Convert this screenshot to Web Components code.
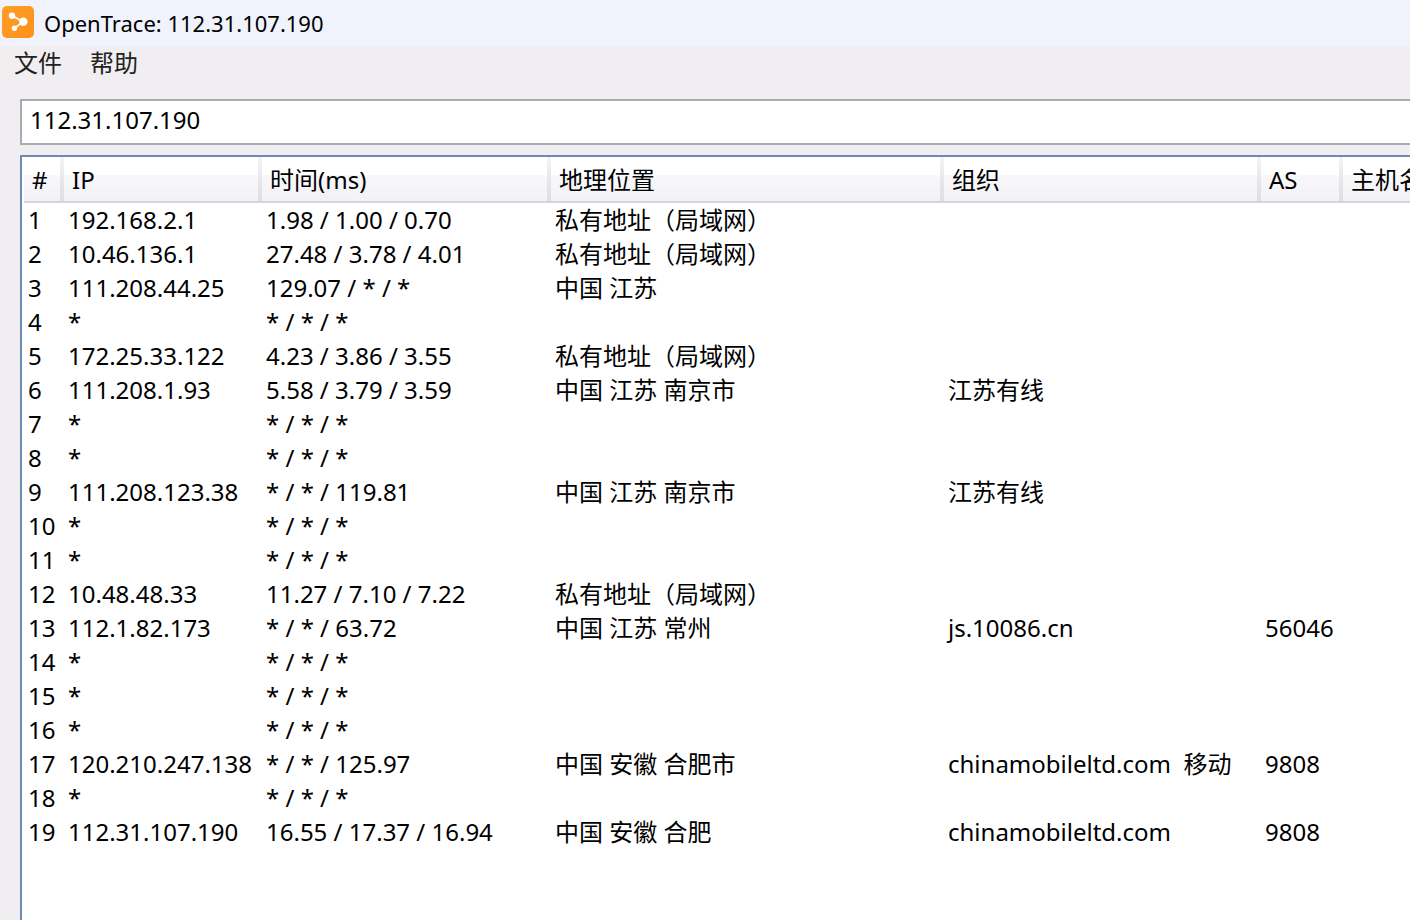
<!DOCTYPE html>
<html lang="zh-CN">
<head>
<meta charset="utf-8">
<title>OpenTrace: 112.31.107.190</title>
<style>
  html, body { margin: 0; height: 100%; }
  body {
    overflow: hidden;
    background: #f0eef1;
    color: #000;
    font: 24px/34px "Noto Sans", "Noto Sans CJK SC", sans-serif;
  }
</style>
</head>
<body>
<trace-window>
  <title-bar slot="title">OpenTrace: 112.31.107.190</title-bar>
  <menu-bar slot="menu">
    <menu-entry>文件</menu-entry>
    <menu-entry>帮助</menu-entry>
  </menu-bar>
  <address-box value="112.31.107.190"></address-box>
  <hop-list></hop-list>
</trace-window>

<script>
class BaseElement extends HTMLElement {
  constructor() {
    super();
    this.attachShadow({ mode: "open" }).innerHTML = this.constructor.markup;
  }
}

customElements.define("trace-window", class extends BaseElement {
  static markup = `
    <style>
      :host { display: flex; flex-direction: column; height: 100vh; }
      main {
        flex: 1; min-height: 0; display: flex; flex-direction: column;
        gap: 10px; padding: 19px 0 0 20px;
      }
    </style>
    <slot name="title"></slot>
    <slot name="menu"></slot>
    <main><slot></slot></main>`;
});

customElements.define("title-bar", class extends BaseElement {
  static markup = `
    <style>
      :host {
        display: flex; align-items: center; gap: 10px; height: 46px;
        padding: 0 2px; box-sizing: border-box; background: #f0f3fc;
        font-size: 22px;
      }
      svg { display: block; flex: none; margin-bottom: 2px; }
    </style>
    <svg width="32" height="32" viewBox="0 0 32 32" aria-hidden="true">
      <defs>
        <linearGradient id="g" x1="0" y1="0" x2="1" y2="1">
          <stop offset="0" stop-color="#ff9f26"/>
          <stop offset="1" stop-color="#fc901c"/>
        </linearGradient>
      </defs>
      <rect width="32" height="32" rx="5" fill="url(#g)"/>
      <path d="M10 9.8 21.3 15.7 12.4 22.2" fill="none" stroke="#fff" stroke-width="1.7"/>
      <circle cx="10" cy="9.8" r="3.2" fill="#fff"/>
      <circle cx="21.3" cy="15.7" r="4.2" fill="#fff"/>
      <circle cx="12.4" cy="22.3" r="2.7" fill="#fff"/>
    </svg>
    <span><slot></slot></span>`;
});

customElements.define("menu-bar", class extends BaseElement {
  static markup = `
    <style>
      :host { display: block; }
      nav { display: flex; }
    </style>
    <nav aria-label="菜单"><slot></slot></nav>`;
});

customElements.define("menu-entry", class extends BaseElement {
  static markup = `
    <style>
      :host { display: block; }
      button {
        display: block; border: 0; margin: 0; padding: 0 14px;
        background: none; color: #222; font: inherit;
      }
    </style>
    <button type="button"><slot></slot></button>`;
});

customElements.define("address-box", class extends BaseElement {
  static markup = `
    <style>
      :host { display: block; }
      input {
        display: block; width: 100%; height: 46px; box-sizing: border-box;
        margin: 0; padding: 0 8px 6px; border: 2px solid #abaab3;
        border-right: 0; border-radius: 0; outline: 0;
        background: #fff; color: #000; font: inherit;
      }
    </style>
    <input type="text" aria-label="IP">`;
  connectedCallback() {
    this.shadowRoot.querySelector("input").value = this.getAttribute("value");
  }
});

const LAN = "私有地址（局域网）";
const NONE = "* / * / *";
const HOPS = [
  ["192.168.2.1", "1.98 / 1.00 / 0.70", LAN],
  ["10.46.136.1", "27.48 / 3.78 / 4.01", LAN],
  ["111.208.44.25", "129.07 / * / *", "中国 江苏"],
  ["*", NONE],
  ["172.25.33.122", "4.23 / 3.86 / 3.55", LAN],
  ["111.208.1.93", "5.58 / 3.79 / 3.59", "中国 江苏 南京市", "江苏有线"],
  ["*", NONE],
  ["*", NONE],
  ["111.208.123.38", "* / * / 119.81", "中国 江苏 南京市", "江苏有线"],
  ["*", NONE],
  ["*", NONE],
  ["10.48.48.33", "11.27 / 7.10 / 7.22", LAN],
  ["112.1.82.173", "* / * / 63.72", "中国 江苏 常州", "js.10086.cn", "56046"],
  ["*", NONE],
  ["*", NONE],
  ["*", NONE],
  ["120.210.247.138", "* / * / 125.97", "中国 安徽 合肥市", "chinamobileltd.com  移动", "9808"],
  ["*", NONE],
  ["112.31.107.190", "16.55 / 17.37 / 16.94", "中国 安徽 合肥", "chinamobileltd.com", "9808"],
];
const COLUMNS = [["#", 40], ["IP", 198], ["时间(ms)", 289], ["地理位置", 393], ["组织", 317], ["AS", 82], ["主机名", 0]];

customElements.define("hop-list", class extends BaseElement {
  static markup = `
    <style>
      :host {
        display: block; flex: 1; min-height: 0; overflow: hidden; padding-left: 2px;
        border: solid #6d8ab5; border-width: 2px 0 0 2px; background: #fff;
      }
      table { width: 100%; min-width: 1500px; table-layout: fixed; border-collapse: separate; border-spacing: 0; }
      th, td { box-sizing: border-box; text-align: left; font-weight: 400; white-space: pre; }
      th {
        height: 46px; padding: 2px 4px 0 8px; border-bottom: 2px solid #d5d4d8;
        background:
          linear-gradient(#f3f2f4, #dedde0) right / 4px 100% no-repeat,
          linear-gradient(#fff 0 42%, #f8f8fb 42%, #f2f1f6);
      }
      td { height: 34px; padding: 0 0 0 4px; }
    </style>
    <table>
      <colgroup></colgroup>
      <thead><tr></tr></thead>
      <tbody></tbody>
    </table>`;
  connectedCallback() {
    const root = this.shadowRoot;
    for (const [label, width] of COLUMNS) {
      const col = document.createElement("col");
      if (width) col.style.width = width + "px";
      root.querySelector("colgroup").append(col);
      const th = document.createElement("th");
      th.scope = "col";
      th.textContent = label;
      root.querySelector("thead tr").append(th);
    }
    HOPS.forEach((hop, i) => {
      const tr = root.querySelector("tbody").insertRow();
      const values = [i + 1, ...hop];
      COLUMNS.forEach((_, c) => { tr.insertCell().textContent = values[c] ?? ""; });
    });
  }
});
</script>
</body>
</html>
